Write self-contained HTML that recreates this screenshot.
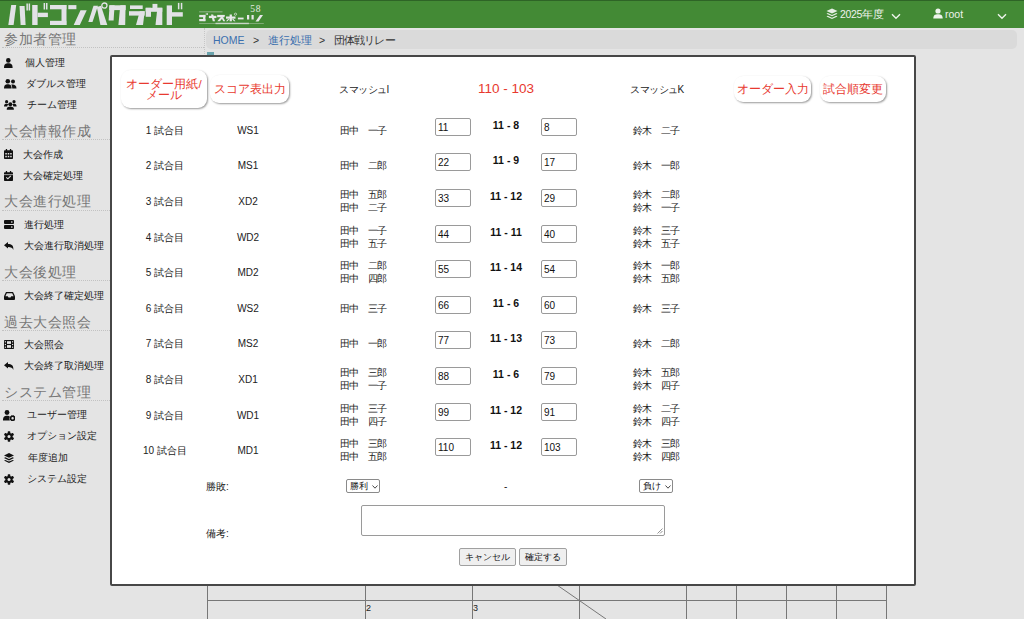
<!DOCTYPE html><html><head><meta charset="utf-8"><style>
*{box-sizing:border-box;margin:0;padding:0}
html,body{width:1024px;height:619px;overflow:hidden;background:#e4e4e4;font-family:"Liberation Sans",sans-serif;color:#222}
#hdr{position:absolute;left:0;top:0;width:1024px;height:28px;background:#438a35;border-top:1px solid #2e6426}
.sh{position:absolute;left:4px;font-size:14px;letter-spacing:0.5px;color:#777;white-space:nowrap;line-height:20px}
.sl{position:absolute;left:2px;width:202px;height:0;border-top:1px dotted #c2c2c2}
.si{position:absolute;font-size:10px;color:#222;white-space:nowrap;line-height:14px}
.ic{position:absolute;left:3px}
#bc{position:absolute;left:206px;top:30px;width:811px;height:19px;background:#dadada;border-radius:5px;font-size:10.5px;line-height:19px;white-space:nowrap}
#bc span{position:absolute;top:1px}
#modal{position:absolute;left:110px;top:55px;width:806px;height:531px;background:#fff;border:2px solid #474747;border-radius:2px}
.btn{position:absolute;background:#fff;border-radius:9px;box-shadow:1px 1px 2px rgba(0,0,0,.4);color:#e83a30;font-size:11.5px;text-align:center;line-height:11px;white-space:nowrap}
.t{position:absolute;font-size:10px;white-space:nowrap;line-height:13px;color:#222}
.inp{position:absolute;width:36px;height:18px;border:1px solid #9a9a9a;border-radius:2px;font-size:10px;line-height:17px;padding-left:2px;color:#111;background:#fff}
.sc{position:absolute;font-size:10.5px;font-weight:bold;white-space:nowrap;width:60px;text-align:center;line-height:12px;color:#111}
.hl{position:absolute;height:1px;background:#777}
.vl{position:absolute;width:1px;background:#777}
</style></head><body>
<div class="hl" style="left:207px;top:600px;width:680px"></div>
<div class="vl" style="left:207px;top:586px;height:33px"></div>
<div class="vl" style="left:365px;top:586px;height:33px"></div>
<div class="vl" style="left:472px;top:586px;height:33px"></div>
<div class="vl" style="left:579px;top:586px;height:33px"></div>
<div class="vl" style="left:686px;top:586px;height:33px"></div>
<div class="vl" style="left:736px;top:586px;height:33px"></div>
<div class="vl" style="left:786px;top:586px;height:33px"></div>
<div class="vl" style="left:836px;top:586px;height:33px"></div>
<div class="vl" style="left:886px;top:586px;height:33px"></div>
<svg style="position:absolute;left:0;top:0" width="1024" height="619"><line x1="557" y1="585" x2="606" y2="619" stroke="#777" stroke-width="1"/></svg>
<div class="t" style="left:366px;top:602px;font-size:9px">2</div>
<div class="t" style="left:473px;top:602px;font-size:9px">3</div>
<div id="hdr"></div>
<svg style="position:absolute;left:0;top:0" width="280" height="28" viewBox="0 0 280 28">
<g fill="#e2e2e6">
<polygon points="11.2,5 16.2,5 13.6,25 8.3,25"/>
<polygon points="19.5,6 24.6,6 25.6,25 20.6,25"/>
<rect x="26.4" y="3.5" width="1.5" height="7"/><rect x="28.6" y="3.5" width="1.5" height="7"/>
<rect x="32.2" y="5" width="5.4" height="20"/><rect x="37.6" y="12.7" width="10.3" height="4.4"/>
<rect x="43.6" y="3" width="1.5" height="6.5"/><rect x="46" y="3" width="1.5" height="6.5"/>
<rect x="50" y="5" width="16.4" height="4.3"/><rect x="61.5" y="5" width="5" height="20"/><rect x="50" y="20.8" width="16.4" height="4.2"/>
<rect x="68.3" y="5.1" width="8.1" height="4.1"/>
<polygon points="80.5,10.3 86.7,10.3 79.8,25 73.7,25"/>
<polygon points="93.5,5.8 98,5.8 92.5,22 88.3,22"/>
<polygon points="96.8,7 101,5.8 107.3,25 100.4,25"/>
<rect x="109.2" y="5.3" width="16.4" height="4.8"/>
<polygon points="109.6,5.3 114.6,5.3 113.6,20.5 108.6,20.5"/>
<polygon points="120.3,5.3 125.6,5.3 125.2,25 118.4,25"/>
<rect x="130" y="5.4" width="12.7" height="3.6"/>
<rect x="129" y="11.2" width="15.7" height="4.4"/>
<polygon points="139.8,11.2 144.7,11.2 143,25 136,25"/>
<rect x="152.5" y="3.9" width="4.9" height="4.2"/>
<rect x="145.7" y="7.8" width="16.6" height="4"/>
<rect x="145.7" y="7.8" width="5.3" height="9"/>
<polygon points="157.4,7.8 162.3,7.8 162.3,25 155.5,25"/>
<rect x="166.7" y="5.4" width="5.3" height="19.6"/><rect x="172" y="12.2" width="10.8" height="4.4"/>
<rect x="177.9" y="2.9" width="1.5" height="6.4"/><rect x="180.8" y="2.9" width="1.5" height="6.4"/>
</g>
<circle cx="104.4" cy="5.6" r="2.6" fill="none" stroke="#e2e2e6" stroke-width="1.3"/>
<g fill="#e8e8ea">
<rect x="199.2" y="11.4" width="23.3" height="0.9" opacity="0.55"/>
<rect x="199.2" y="14.9" width="6.2" height="2.3"/><rect x="203.1" y="14.9" width="2.3" height="6.2"/><rect x="199.2" y="19" width="6.2" height="2.2"/>
<rect x="205.8" y="13.1" width="0.8" height="1.9"/><rect x="207" y="13.1" width="0.8" height="1.9"/>
<rect x="208.9" y="15.8" width="7.5" height="2.3"/><polygon points="211,14.5 213.2,14.5 215,21.2 212.8,21.2"/>
<rect x="217.2" y="14.9" width="7.4" height="2.3"/><polygon points="222.5,14.9 225,14.9 220,21.2 217.3,21.2"/><polygon points="221.5,18 223,17 225.2,21.2 223.2,21.2"/>
<rect x="226" y="16.5" width="9.5" height="2.2"/><rect x="229.6" y="14.5" width="2.3" height="6.8"/><polygon points="228,19 229.5,19 227.5,21.2 226,21.2"/><polygon points="232,19 233.5,19 235.5,21.2 234,21.2"/>
<circle cx="235.5" cy="14.2" r="1.1" fill="none" stroke="#e8e8ea" stroke-width="0.7"/>
<rect x="237.9" y="17.6" width="5.7" height="1.8"/>
<rect x="247" y="15" width="2.2" height="4.5"/><rect x="251.5" y="15" width="2.2" height="4.5"/><polygon points="260,15 263,15 258.5,21.5 255.5,21.5"/>
<rect x="199.2" y="23.1" width="64.6" height="0.6" opacity="0.6"/>
<rect x="215.5" y="22.7" width="33.4" height="1.5" opacity="0.7"/>
</g>
<text x="250.3" y="12" font-family="Liberation Serif" font-size="9.5" fill="#e4ece2" letter-spacing="0.6">58</text>
</svg>
<svg style="position:absolute;left:826px;top:8px" width="12" height="12" viewBox="0 0 12 12"><g fill="#e6eee4"><path d="M6 0.5 L11.5 3 L6 5.5 L0.5 3Z"/><path d="M1.8 5 L6 7 L10.2 5 L11.5 5.8 L6 8.3 L0.5 5.8Z"/><path d="M1.8 7.7 L6 9.7 L10.2 7.7 L11.5 8.5 L6 11 L0.5 8.5Z"/></g></svg>
<div style="position:absolute;left:840px;top:8px;font-size:10.5px;line-height:13px;color:#eef3ec;white-space:nowrap;letter-spacing:-0.3px">2025年度</div>
<svg style="position:absolute;left:891px;top:13px" width="10" height="7" viewBox="0 0 10 7"><path d="M1 1.2 L5 5.2 L9 1.2" fill="none" stroke="#eef3ec" stroke-width="1.4"/></svg>
<svg style="position:absolute;left:933px;top:8px" width="10" height="11" viewBox="0 0 10 11"><g fill="#eef3ec"><circle cx="5" cy="3" r="2.6"/><path d="M0.3 10.6 C0.3 7 2 6.2 5 6.2 C8 6.2 9.7 7 9.7 10.6Z"/></g></svg>
<div style="position:absolute;left:945px;top:7px;font-size:10.5px;line-height:14px;color:#eef3ec">root</div>
<svg style="position:absolute;left:997px;top:13px" width="10" height="7" viewBox="0 0 10 7"><path d="M1 1.2 L5 5.2 L9 1.2" fill="none" stroke="#eef3ec" stroke-width="1.4"/></svg>
<div class="sh" style="top:29px">参加者管理</div>
<div class="sl" style="top:47px"></div>
<div class="sh" style="top:121px">大会情報作成</div>
<div class="sl" style="top:139px"></div>
<div class="sh" style="top:191px">大会進行処理</div>
<div class="sl" style="top:210px"></div>
<div class="sh" style="top:262px">大会後処理</div>
<div class="sl" style="top:280px"></div>
<div class="sh" style="top:312px">過去大会照会</div>
<div class="sl" style="top:330px"></div>
<div class="sh" style="top:382px">システム管理</div>
<div class="sl" style="top:400px"></div>
<div class="si" style="left:25px;top:56px">個人管理</div>
<div class="si" style="left:26px;top:77px">ダブルス管理</div>
<div class="si" style="left:27px;top:98px">チーム管理</div>
<div class="si" style="left:23px;top:148px">大会作成</div>
<div class="si" style="left:23px;top:169px">大会確定処理</div>
<div class="si" style="left:24px;top:218px">進行処理</div>
<div class="si" style="left:24px;top:239px">大会進行取消処理</div>
<div class="si" style="left:24px;top:289px">大会終了確定処理</div>
<div class="si" style="left:24px;top:338px">大会照会</div>
<div class="si" style="left:24px;top:359px">大会終了取消処理</div>
<div class="si" style="left:27px;top:408px">ユーザー管理</div>
<div class="si" style="left:27px;top:429px">オプション設定</div>
<div class="si" style="left:28px;top:451px">年度追加</div>
<div class="si" style="left:27px;top:472px">システム設定</div>
<div style="position:absolute;left:3.8px;top:57.7px;line-height:0"><svg width="9" height="10" viewBox="0 0 9 10"><circle cx="4.3" cy="2.4" r="2.3" fill="#111"/><path d="M0 10 C0 6.2 1.6 5.3 4.3 5.3 C7 5.3 8.6 6.2 8.6 10Z" fill="#111"/></svg></div>
<div style="position:absolute;left:3.7px;top:79px;line-height:0"><svg width="13" height="10" viewBox="0 0 13 10"><circle cx="3.8" cy="2.3" r="2.3" fill="#111"/><circle cx="9" cy="2.6" r="2" fill="#111"/><path d="M0 9.6 C0 6 1.4 5.2 3.8 5.2 C6.2 5.2 7.6 6 7.6 9.6Z" fill="#111"/><path d="M8.2 9.6 C8.2 7.4 7.8 6.4 7.2 5.8 C9.5 5.2 12.5 5.8 12.5 9.6Z" fill="#111"/></svg></div>
<div style="position:absolute;left:3.7px;top:100.3px;line-height:0"><svg width="13" height="10" viewBox="0 0 13 10"><circle cx="2.6" cy="1.7" r="1.6" fill="#111"/><circle cx="10" cy="1.7" r="1.6" fill="#111"/><circle cx="6.3" cy="4.3" r="2" fill="#111"/><path d="M0 6.5 C0 4.2 1.2 3.8 2.6 3.8 C3.6 3.8 4 4.2 4.2 4.6 C3.6 5.3 3.3 6 3.2 6.5Z" fill="#111"/><path d="M12.6 6.5 C12.6 4.2 11.4 3.8 10 3.8 C9 3.8 8.6 4.2 8.4 4.6 C9 5.3 9.3 6 9.4 6.5Z" fill="#111"/><path d="M2.7 9.8 C2.7 7.2 4 6.6 6.3 6.6 C8.6 6.6 9.9 7.2 9.9 9.8Z" fill="#111"/></svg></div>
<div style="position:absolute;left:3.6px;top:149.4px;line-height:0"><svg width="9" height="10" viewBox="0 0 9 10"><rect x="1.8" y="0" width="1.3" height="2" fill="#111"/><rect x="5.9" y="0" width="1.3" height="2" fill="#111"/><rect x="0" y="1.2" width="9" height="8.8" rx="0.8" fill="#111"/><g fill="#e4e4e4"><rect x="1.3" y="4" width="1.5" height="1.5"/><rect x="3.75" y="4" width="1.5" height="1.5"/><rect x="6.2" y="4" width="1.5" height="1.5"/><rect x="1.3" y="6.8" width="1.5" height="1.5"/><rect x="3.75" y="6.8" width="1.5" height="1.5"/><rect x="6.2" y="6.8" width="1.5" height="1.5"/></g></svg></div>
<div style="position:absolute;left:3.6px;top:170.7px;line-height:0"><svg width="9" height="10" viewBox="0 0 9 10"><rect x="1.8" y="0" width="1.3" height="2" fill="#111"/><rect x="5.9" y="0" width="1.3" height="2" fill="#111"/><rect x="0" y="1.2" width="9" height="8.8" rx="0.8" fill="#111"/><rect x="0" y="3.4" width="9" height="0.7" fill="#e4e4e4"/><path d="M2.3 6.3 L3.9 7.8 L6.8 4.9" fill="none" stroke="#e4e4e4" stroke-width="1.1"/></svg></div>
<div style="position:absolute;left:3.6px;top:219.6px;line-height:0"><svg width="10" height="9" viewBox="0 0 10 9"><rect x="0" y="0" width="10" height="4" rx="1" fill="#111"/><rect x="0" y="5" width="10" height="4" rx="1" fill="#111"/><rect x="7" y="1.4" width="1.5" height="1.2" fill="#e4e4e4"/><rect x="7" y="6.4" width="1.5" height="1.2" fill="#e4e4e4"/></svg></div>
<div style="position:absolute;left:3.9px;top:241.8px;line-height:0"><svg width="10" height="8" viewBox="0 0 10 8"><path d="M0 3.2 L4 0 L4 2 C7.5 2 9.8 3.5 9.3 8 C8.6 5.8 7 5 4 5 L4 6.6Z" fill="#111"/></svg></div>
<div style="position:absolute;left:3.6px;top:291.5px;line-height:0"><svg width="11" height="8" viewBox="0 0 11 8"><path d="M2 0 L9 0 L11 4.2 L11 7 Q11 8 10 8 L1 8 Q0 8 0 7 L0 4.2Z" fill="#111"/><path d="M2.8 1.3 L8.2 1.3 L9.6 4.3 L7.2 4.3 L6.5 5.5 L4.5 5.5 L3.8 4.3 L1.4 4.3Z" fill="#e4e4e4"/></svg></div>
<div style="position:absolute;left:3.6px;top:340.3px;line-height:0"><svg width="10" height="9" viewBox="0 0 10 9"><rect x="0" y="0" width="10" height="9" rx="0.8" fill="#111"/><g fill="#e4e4e4"><rect x="3" y="1.2" width="4" height="2.7"/><rect x="3" y="5.1" width="4" height="2.7"/><rect x="0.8" y="1.2" width="1.2" height="1.2"/><rect x="0.8" y="3.9" width="1.2" height="1.2"/><rect x="0.8" y="6.6" width="1.2" height="1.2"/><rect x="8" y="1.2" width="1.2" height="1.2"/><rect x="8" y="3.9" width="1.2" height="1.2"/><rect x="8" y="6.6" width="1.2" height="1.2"/></g></svg></div>
<div style="position:absolute;left:3.9px;top:362px;line-height:0"><svg width="10" height="8" viewBox="0 0 10 8"><path d="M0 3.2 L4 0 L4 2 C7.5 2 9.8 3.5 9.3 8 C8.6 5.8 7 5 4 5 L4 6.6Z" fill="#111"/></svg></div>
<div style="position:absolute;left:3.4px;top:409.8px;line-height:0"><svg width="12" height="11" viewBox="0 0 12 11"><circle cx="4" cy="2.5" r="2.4" fill="#111"/><path d="M0 10.5 C0 6.8 1.5 5.8 4 5.8 C5.5 5.8 6.3 6 6.8 6.5 C6.2 7.5 6.2 9 6.9 10.5Z" fill="#111"/><circle cx="9.6" cy="8.2" r="2" fill="none" stroke="#111" stroke-width="1.6"/><circle cx="9.6" cy="8.2" r="2.6" fill="none" stroke="#111" stroke-width="1" stroke-dasharray="1.2 0.8"/></svg></div>
<div style="position:absolute;left:3.8px;top:431px;line-height:0"><svg width="10" height="11" viewBox="0 0 10 11"><g transform="translate(5 5.5)"><g fill="#111"><rect x="-1.3" y="-5.2" width="2.6" height="10.4" rx="0.6"/><rect x="-1.3" y="-5.2" width="2.6" height="10.4" rx="0.6" transform="rotate(60)"/><rect x="-1.3" y="-5.2" width="2.6" height="10.4" rx="0.6" transform="rotate(120)"/><circle r="3.6"/></g><circle r="1.5" fill="#e4e4e4"/></g></svg></div>
<div style="position:absolute;left:3.8px;top:453px;line-height:0"><svg width="10" height="10" viewBox="0 0 10 10"><g fill="#111"><path d="M5 0 L10 2.4 L5 4.8 L0 2.4Z"/><path d="M1.4 4.3 L5 6 L8.6 4.3 L10 5 L5 7.4 L0 5Z"/><path d="M1.4 6.9 L5 8.6 L8.6 6.9 L10 7.6 L5 10 L0 7.6Z"/></g></svg></div>
<div style="position:absolute;left:3.8px;top:473.8px;line-height:0"><svg width="10" height="11" viewBox="0 0 10 11"><g transform="translate(5 5.5)"><g fill="#111"><rect x="-1.3" y="-5.2" width="2.6" height="10.4" rx="0.6"/><rect x="-1.3" y="-5.2" width="2.6" height="10.4" rx="0.6" transform="rotate(60)"/><rect x="-1.3" y="-5.2" width="2.6" height="10.4" rx="0.6" transform="rotate(120)"/><circle r="3.6"/></g><circle r="1.5" fill="#e4e4e4"/></g></svg></div>
<div style="position:absolute;left:204px;top:28px;width:0;height:30px;border-left:1px dotted #c6c6c6"></div>
<div id="bc"><span style="left:7px;color:#3b6fae">HOME</span><span style="left:47px;color:#333">&gt;</span><span style="left:62px;color:#3b6fae">進行処理</span><span style="left:113px;color:#333">&gt;</span><span style="left:128px;color:#333;letter-spacing:-0.9px">団体戦リレー</span></div>
<div style="position:absolute;left:207px;top:52px;width:7px;height:3px;background:#6aa3ad"></div>
<div id="modal"></div>
<div class="btn" style="left:121px;top:70px;width:86px;height:38px;padding-top:9px">オーダー用紙/<br>メール</div>
<div class="btn" style="left:210px;top:75px;width:79px;height:28px;line-height:28px">スコア表出力</div>
<div class="btn" style="left:734px;top:76px;width:77px;height:26px;line-height:26px">オーダー入力</div>
<div class="btn" style="left:820px;top:76px;width:66px;height:26px;line-height:26px">試合順変更</div>
<div class="t" style="left:339px;top:83px;letter-spacing:-0.5px">スマッシュI</div>
<div class="t" style="left:630px;top:83px;letter-spacing:-0.5px">スマッシュK</div>
<div class="t" style="left:446px;top:81px;width:120px;text-align:center;font-size:13.5px;line-height:15px;color:#e8392e">110 - 103</div>
<div class="t" style="left:115px;top:124px;width:100px;text-align:center">1 試合目</div>
<div class="t" style="left:198px;top:124px;width:100px;text-align:center">WS1</div>
<div class="t" style="left:340px;top:124px;letter-spacing:-0.7px">田中　一子</div>
<div class="t" style="left:633px;top:124px;letter-spacing:-0.7px">鈴木　二子</div>
<div class="inp" style="left:435px;top:118px">11</div>
<div class="inp" style="left:541px;top:118px">8</div>
<div class="sc" style="left:476px;top:119px">11 - 8</div>
<div class="t" style="left:115px;top:159px;width:100px;text-align:center">2 試合目</div>
<div class="t" style="left:198px;top:159px;width:100px;text-align:center">MS1</div>
<div class="t" style="left:340px;top:159px;letter-spacing:-0.7px">田中　二郎</div>
<div class="t" style="left:633px;top:159px;letter-spacing:-0.7px">鈴木　一郎</div>
<div class="inp" style="left:435px;top:153px">22</div>
<div class="inp" style="left:541px;top:153px">17</div>
<div class="sc" style="left:476px;top:154px">11 - 9</div>
<div class="t" style="left:115px;top:195px;width:100px;text-align:center">3 試合目</div>
<div class="t" style="left:198px;top:195px;width:100px;text-align:center">XD2</div>
<div class="t" style="left:340px;top:188px;letter-spacing:-0.7px">田中　五郎<br>田中　二子</div>
<div class="t" style="left:633px;top:188px;letter-spacing:-0.7px">鈴木　二郎<br>鈴木　一子</div>
<div class="inp" style="left:435px;top:189px">33</div>
<div class="inp" style="left:541px;top:189px">29</div>
<div class="sc" style="left:476px;top:190px">11 - 12</div>
<div class="t" style="left:115px;top:231px;width:100px;text-align:center">4 試合目</div>
<div class="t" style="left:198px;top:231px;width:100px;text-align:center">WD2</div>
<div class="t" style="left:340px;top:224px;letter-spacing:-0.7px">田中　一子<br>田中　五子</div>
<div class="t" style="left:633px;top:224px;letter-spacing:-0.7px">鈴木　三子<br>鈴木　五子</div>
<div class="inp" style="left:435px;top:225px">44</div>
<div class="inp" style="left:541px;top:225px">40</div>
<div class="sc" style="left:476px;top:226px">11 - 11</div>
<div class="t" style="left:115px;top:266px;width:100px;text-align:center">5 試合目</div>
<div class="t" style="left:198px;top:266px;width:100px;text-align:center">MD2</div>
<div class="t" style="left:340px;top:259px;letter-spacing:-0.7px">田中　二郎<br>田中　四郎</div>
<div class="t" style="left:633px;top:259px;letter-spacing:-0.7px">鈴木　一郎<br>鈴木　五郎</div>
<div class="inp" style="left:435px;top:260px">55</div>
<div class="inp" style="left:541px;top:260px">54</div>
<div class="sc" style="left:476px;top:261px">11 - 14</div>
<div class="t" style="left:115px;top:302px;width:100px;text-align:center">6 試合目</div>
<div class="t" style="left:198px;top:302px;width:100px;text-align:center">WS2</div>
<div class="t" style="left:340px;top:302px;letter-spacing:-0.7px">田中　三子</div>
<div class="t" style="left:633px;top:302px;letter-spacing:-0.7px">鈴木　三子</div>
<div class="inp" style="left:435px;top:296px">66</div>
<div class="inp" style="left:541px;top:296px">60</div>
<div class="sc" style="left:476px;top:297px">11 - 6</div>
<div class="t" style="left:115px;top:337px;width:100px;text-align:center">7 試合目</div>
<div class="t" style="left:198px;top:337px;width:100px;text-align:center">MS2</div>
<div class="t" style="left:340px;top:337px;letter-spacing:-0.7px">田中　一郎</div>
<div class="t" style="left:633px;top:337px;letter-spacing:-0.7px">鈴木　二郎</div>
<div class="inp" style="left:435px;top:331px">77</div>
<div class="inp" style="left:541px;top:331px">73</div>
<div class="sc" style="left:476px;top:332px">11 - 13</div>
<div class="t" style="left:115px;top:373px;width:100px;text-align:center">8 試合目</div>
<div class="t" style="left:198px;top:373px;width:100px;text-align:center">XD1</div>
<div class="t" style="left:340px;top:366px;letter-spacing:-0.7px">田中　三郎<br>田中　一子</div>
<div class="t" style="left:633px;top:366px;letter-spacing:-0.7px">鈴木　五郎<br>鈴木　四子</div>
<div class="inp" style="left:435px;top:367px">88</div>
<div class="inp" style="left:541px;top:367px">79</div>
<div class="sc" style="left:476px;top:368px">11 - 6</div>
<div class="t" style="left:115px;top:409px;width:100px;text-align:center">9 試合目</div>
<div class="t" style="left:198px;top:409px;width:100px;text-align:center">WD1</div>
<div class="t" style="left:340px;top:402px;letter-spacing:-0.7px">田中　三子<br>田中　四子</div>
<div class="t" style="left:633px;top:402px;letter-spacing:-0.7px">鈴木　二子<br>鈴木　四子</div>
<div class="inp" style="left:435px;top:403px">99</div>
<div class="inp" style="left:541px;top:403px">91</div>
<div class="sc" style="left:476px;top:404px">11 - 12</div>
<div class="t" style="left:115px;top:444px;width:100px;text-align:center">10 試合目</div>
<div class="t" style="left:198px;top:444px;width:100px;text-align:center">MD1</div>
<div class="t" style="left:340px;top:437px;letter-spacing:-0.7px">田中　三郎<br>田中　五郎</div>
<div class="t" style="left:633px;top:437px;letter-spacing:-0.7px">鈴木　三郎<br>鈴木　四郎</div>
<div class="inp" style="left:435px;top:438px">110</div>
<div class="inp" style="left:541px;top:438px">103</div>
<div class="sc" style="left:476px;top:439px">11 - 12</div>
<div class="t" style="left:206px;top:480px">勝敗:</div>
<div class="t" style="left:206px;top:527px">備考:</div>
<div style="position:absolute;left:346px;top:479px;width:34px;height:14px;border:1px solid #8a8a8a;border-radius:2px;font-size:9px;line-height:12px;padding-left:3px;color:#111;white-space:nowrap">勝利<svg style="position:absolute;left:25px;top:5px" width="6" height="4" viewBox="0 0 6 4"><path d="M0.5 0.5 L3 3.2 L5.5 0.5" fill="none" stroke="#333" stroke-width="0.9"/></svg></div>
<div class="t" style="left:504px;top:480px">-</div>
<div style="position:absolute;left:639px;top:479px;width:34px;height:14px;border:1px solid #8a8a8a;border-radius:2px;font-size:9px;line-height:12px;padding-left:3px;color:#111;white-space:nowrap">負け<svg style="position:absolute;left:25px;top:5px" width="6" height="4" viewBox="0 0 6 4"><path d="M0.5 0.5 L3 3.2 L5.5 0.5" fill="none" stroke="#333" stroke-width="0.9"/></svg></div>
<div style="position:absolute;left:361px;top:505px;width:304px;height:31px;border:1px solid #9a9a9a;border-radius:2px"><svg style="position:absolute;right:1px;bottom:1px" width="6" height="6" viewBox="0 0 6 6"><path d="M5.5 0.5 L0.5 5.5 M5.5 3 L3 5.5" stroke="#777" stroke-width="0.8"/></svg></div>
<div style="position:absolute;left:459px;top:548px;width:57px;height:18px;border:1px solid #a0a0a0;border-radius:2px;background:#efefef;font-size:9px;line-height:16px;text-align:center;color:#111">キャンセル</div>
<div style="position:absolute;left:519px;top:548px;width:48px;height:18px;border:1px solid #a0a0a0;border-radius:2px;background:#efefef;font-size:9px;line-height:16px;text-align:center;color:#111">確定する</div>
</body></html>
